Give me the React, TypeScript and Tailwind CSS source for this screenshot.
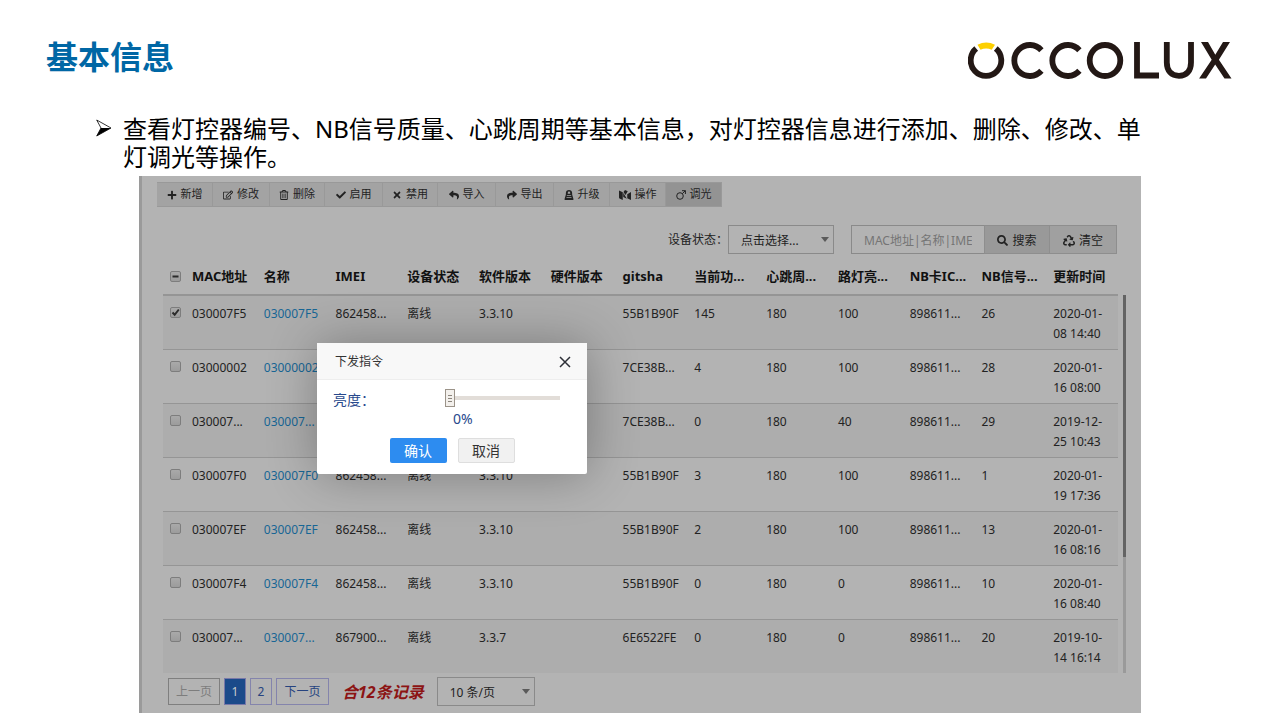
import React from "react";
import { FaPlus, FaRegEdit, FaRegTrashAlt, FaCheck, FaTimes, FaReply, FaShare, FaSearch, FaRecycle } from "react-icons/fa";

function LockIcon() {
  return (
    <svg viewBox="0 0 16 16" fill="currentColor" className="h-2.5 w-2.5" aria-hidden="true">
      <path fillRule="evenodd" d="M8 0C5 0 3 1.800 3 4.600V7L1 14V16h14v-2L13 7V4.600C13 1.800 11 0 8 0ZM6 5c0-1.600.8-2.600 2-2.600s2 1 2 2.600v1H6V5ZM4.500 8.400h7v1.200h-7ZM4 11.600h8v1.200H4Z" />
    </svg>
  );
}

function FoldIcon() {
  return (
    <svg viewBox="0 0 24 20" fill="currentColor" className="h-2.5 w-3" aria-hidden="true">
      <path d="M0 1l7.500 3.700V20L1 16.800Q0 16.300 0 15ZM8.500 5.500 15.700 17.600 8.500 14ZM9 3.800 12 0l5.500 2.600-4.500 7.500ZM16.500 8.500l7.500-4.500V19q0 1.200-1.200.6l-6.300-3.100Z" />
    </svg>
  );
}

function MarsIcon() {
  return (
    <svg viewBox="0 0 10 10" fill="none" stroke="currentColor" className="h-2.5 w-2.5" aria-hidden="true">
      <circle cx="4" cy="6" r="3.300" />
      <path d="M6.300 3.700 9.300 0.700M6 0.700H9.400V4" />
    </svg>
  );
}

function Logo() {
  return (
    <svg viewBox="0 0 264 38" className="h-[38px] w-[264px]" role="img" aria-label="OCCOLUX">
      <g fill="none" stroke="#231815" strokeWidth="5.800">
        <path d="M8.200 6.500A15.300 15.500 0 1 0 27.800 6.500" />
        <path d="M73.400 8.200A15.500 15.500 0 1 0 73.400 28.800" />
        <path d="M111.400 8.200A15.500 15.500 0 1 0 111.400 28.800" />
        <ellipse cx="137" cy="18.500" rx="15.300" ry="15.500" />
        <path d="M169 0V33.500H191" />
        <path d="M198.800 0V20.500C198.800 29 203.500 33.800 211 33.800S223 29 223 20.500V0" />
      </g>
      <path d="M233 0h7l7.300 12.800L255 0h7L250.900 17.800 263.500 36.500h-7L247.200 22.600 238 36.500h-6.900L243.700 17.800Z" fill="#231815" />
      <path d="M9.500 2.700A19 19 0 0 1 27 2.700L23.700 7.800A14 14 0 0 0 12.500 7.800Z" fill="#fdd000" />
    </svg>
  );
}

const tools = [
  { label: "新增", icon: <FaPlus />, cls: "w-14 bg-[#a3a3a3]" },
  { label: "修改", icon: <FaRegEdit />, cls: "w-[57px] bg-[#a3a3a3]" },
  { label: "删除", icon: <FaRegTrashAlt />, cls: "w-[55px] bg-[#a3a3a3]" },
  { label: "启用", icon: <FaCheck />, cls: "w-[58px] bg-[#a3a3a3]" },
  { label: "禁用", icon: <FaTimes />, cls: "w-[55px] bg-[#a3a3a3]" },
  { label: "导入", icon: <FaReply />, cls: "w-[58px] bg-[#a3a3a3]" },
  { label: "导出", icon: <FaShare />, cls: "w-[58px] bg-[#a3a3a3]" },
  { label: "升级", icon: <LockIcon />, cls: "w-14 bg-[#a3a3a3]" },
  { label: "操作", icon: <FoldIcon />, cls: "w-14 bg-[#a3a3a3]" },
  { label: "调光", icon: <MarsIcon />, cls: "w-14 bg-[#939393]" },
];

const heads = ["MAC地址", "名称", "IMEI", "设备状态", "软件版本", "硬件版本", "gitsha", "当前功...", "心跳周...", "路灯亮...", "NB卡IC...", "NB信号...", "更新时间"];

const rows = [
  ["030007F5", "030007F5", "862458...", "离线", "3.3.10", "", "55B1B90F", "145", "180", "100", "898611...", "26", "2020-01-08 14:40"],
  ["03000002", "03000002", "862458...", "离线", "3.3.10", "", "7CE38B...", "4", "180", "100", "898611...", "28", "2020-01-16 08:00"],
  ["030007...", "030007...", "862458...", "离线", "3.3.10", "", "7CE38B...", "0", "180", "40", "898611...", "29", "2019-12-25 10:43"],
  ["030007F0", "030007F0", "862458...", "离线", "3.3.10", "", "55B1B90F", "3", "180", "100", "898611...", "1", "2020-01-19 17:36"],
  ["030007EF", "030007EF", "862458...", "离线", "3.3.10", "", "55B1B90F", "2", "180", "100", "898611...", "13", "2020-01-16 08:16"],
  ["030007F4", "030007F4", "862458...", "离线", "3.3.10", "", "55B1B90F", "0", "180", "0", "898611...", "10", "2020-01-16 08:40"],
  ["030007...", "030007...", "867900...", "离线", "3.3.7", "", "6E6522FE", "0", "180", "0", "898611...", "20", "2019-10-14 16:14"],
];

function Cell({ text, column }: { text: string; column: number }) {
  if (column === 1) {
    return (
      <a href="#" className="text-[#176695]">
        {text}
      </a>
    );
  }
  if (column === 12) {
    return (
      <>
        {text.slice(0, 8)}
        <wbr />
        {text.slice(8)}
      </>
    );
  }
  return <>{text}</>;
}

function Tick({ label, mark }: { label: string; mark?: "check" | "dash" }) {
  return (
    <span className="relative block h-[11px] w-[11px]">
      <input
        type="checkbox"
        aria-label={label}
        defaultChecked={mark === "check"}
        className="block h-[11px] w-[11px] appearance-none rounded-xs border border-[#7d7d7d] bg-linear-to-b from-[#a9a9a9] to-[#9c9c9c]"
      />
      {mark && (
        <svg viewBox="0 0 11 11" className="pointer-events-none absolute inset-0 h-[11px] w-[11px]" fill="none" stroke="#2b2b2b" strokeWidth="2" aria-hidden="true">
          <path d={mark === "check" ? "M2.500 5.500 4.700 7.800 8.800 2.500" : "M2.500 5.500H8.500"} />
        </svg>
      )}
    </span>
  );
}

function Select({ label, value, cls }: { label: string; value: string; cls: string }) {
  return (
    <span className="relative block">
      <select aria-label={label} className={`block appearance-none border border-[#8a8a8a] bg-transparent pt-0.5 pl-3 text-xs text-[#222] ${cls}`}>
        <option>{value}</option>
      </select>
      <svg viewBox="0 0 8 5" className="pointer-events-none absolute top-3 right-[5px] h-[5px] w-2" fill="#5a5a5a" aria-hidden="true">
        <path d="M0 0H8L4 5Z" />
      </svg>
    </span>
  );
}

function Dialog() {
  return (
    <section role="dialog" aria-label="下发指令" className="absolute top-[167px] left-[175px] w-[270px] rounded-xs bg-white pb-[11px] shadow-[1px_1px_50px_rgba(0,0,0,0.3)]">
      <header className="flex h-[37px] items-center justify-between border-b border-[#eee] bg-[#f8f8f8] pt-0.5 pr-4 pl-[18px]">
        <h2 className="text-xs text-[#333]">下发指令</h2>
        <button aria-label="关闭" className="text-[#2d3038]">
          <svg viewBox="0 0 12 12" className="h-3 w-3" fill="none" stroke="currentColor" strokeWidth="1.500" aria-hidden="true">
            <path d="M1 1 11 11M11 1 1 11" />
          </svg>
        </button>
      </header>
      <div className="flex justify-between pt-2 pr-[27px] pl-4 text-sm text-[#27488c]">
        <label htmlFor="level" className="pt-0.5 leading-5">亮度：</label>
        <div className="w-[115px]">
          <input
            id="level"
            type="range"
            defaultValue={0}
            className="block h-5 w-full appearance-none bg-transparent [&::-webkit-slider-runnable-track]:h-1 [&::-webkit-slider-runnable-track]:bg-[#e2ddd8] [&::-webkit-slider-thumb]:-mt-[7px] [&::-webkit-slider-thumb]:h-[18px] [&::-webkit-slider-thumb]:w-[10px] [&::-webkit-slider-thumb]:appearance-none [&::-webkit-slider-thumb]:border [&::-webkit-slider-thumb]:border-[#9b9389] [&::-webkit-slider-thumb]:bg-[#f3f0ec] [&::-webkit-slider-thumb]:bg-[repeating-linear-gradient(to_bottom,#8b857d_0px,#8b857d_1px,#f3f0ec_1px,#f3f0ec_3px)] [&::-webkit-slider-thumb]:bg-size-[4px_7px] [&::-webkit-slider-thumb]:bg-center [&::-webkit-slider-thumb]:bg-no-repeat"
          />
          <output htmlFor="level" className="block pl-2 leading-[22px]">0%</output>
        </div>
      </div>
      <div className="flex justify-center gap-[11px] pt-2">
        <button className="h-[25px] w-[57px] rounded-xs bg-[#2d8cf0] text-sm text-white">确认</button>
        <button className="h-[25px] w-[57px] rounded-xs border border-[#dedede] bg-[#f1f1f1] text-sm text-[#333]">取消</button>
      </div>
    </section>
  );
}

export default function App() {
  return (
    <main className="min-h-screen bg-white pb-[7px] font-['Noto_Sans','Noto_Sans_CJK_SC',sans-serif]">
      <header className="flex justify-between pt-[37px] pr-12 pl-[46px]">
        <h1 className="text-[32px] leading-10 font-bold text-[#0067a5]">基本信息</h1>
        <div className="pt-[5px]">
          <Logo />
        </div>
      </header>
      <div className="flex gap-[11px] pt-[35px] pr-[120px] pl-24 text-black">
        <svg viewBox="0 0 16 18" className="mt-1 h-[18px] w-4 shrink-0" aria-hidden="true">
          <path d="M0.700 1 15 9 0.700 17 5 9Z" fill="#fff" stroke="#000" strokeWidth="0.800" />
          <path d="M15 9 0.700 17 5 9Z" fill="#000" />
        </svg>
        <p className="text-2xl leading-7">
          查看灯控器编号、NB信号质量、心跳周期等基本信息，对灯控器信息进行添加、删除、修改、单灯调光等操作。
        </p>
      </div>

      <div className="relative mt-[5px] mr-[139px] ml-[139px] border-l-3 border-[#9a9a9a] bg-[#b3b3b3] pb-[7px] text-xs text-[#222]">
        <div className="flex pt-[6px] pl-[15px]">
          {tools.map((t) => (
            <button key={t.label} className={`flex h-[25px] items-center justify-center gap-1 border border-l-0 border-[#999] text-[11px] text-[#222] ${t.cls}`}>
              <span className="text-[10px]">{t.icon}</span>
              {t.label}
            </button>
          ))}
        </div>

        <div className="flex items-center justify-end pt-[18px] pr-6">
          <span>设备状态：</span>
          <Select label="设备状态" value="点击选择..." cls="h-[29px] w-[106px]" />
          <input
            type="text"
            aria-label="搜索条件"
            placeholder="MAC地址|名称|IMEI"
            className="ml-[17px] h-[29px] w-[133px] border border-r-0 border-[#8a8a8a] bg-transparent px-3 pt-0.5 text-xs placeholder:text-[#757575]"
          />
          <button className="flex h-[29px] w-[66px] items-center justify-center gap-1 border border-[#8e8e8e] bg-[#999] pt-0.5">
            <FaSearch className="h-[11px] w-[11px]" />
            搜索
          </button>
          <button className="flex h-[29px] w-[67px] items-center justify-center gap-1 border border-l-0 border-[#8e8e8e] bg-[#a0a0a0] pt-0.5">
            <FaRecycle className="h-3 w-3" />
            清空
          </button>
        </div>

        <div className="flex pt-[5px] pr-[15px] pl-[21px]">
          <div className="min-w-0 flex-1">
            <table className="w-full table-fixed border-separate border-spacing-0 text-left">
              <colgroup>
                <col className="w-[22px]" />
                {heads.map((h) => (
                  <col key={h} />
                ))}
              </colgroup>
              <thead>
                <tr>
                  <th className="h-9 border-b border-[#959595] pl-[7px]">
                    <Tick label="全选" mark="dash" />
                  </th>
                  {heads.map((h) => (
                    <th key={h} className="h-9 border-b border-[#959595] pl-[7px] text-[13px] font-bold whitespace-nowrap text-[#111]">
                      {h}
                    </th>
                  ))}
                </tr>
              </thead>
              <tbody className="leading-5">
                {rows.map((r, i) => (
                  <tr key={i} className="odd:bg-[#adadad]">
                    <td className="border-t border-[#959595] pt-[11px] pb-[5px] pl-[7px] align-top">
                      <Tick label={`选择 ${r[0]}`} mark={i === 0 ? "check" : undefined} />
                    </td>
                    {r.map((c, j) => (
                      <td key={j} className="border-t border-[#959595] pt-2 pr-1 pb-[5px] pl-[7px] align-top">
                        <Cell text={c} column={j} />
                      </td>
                    ))}
                  </tr>
                ))}
              </tbody>
            </table>
          </div>
          <div className="mt-9 ml-[5px] w-[3px] bg-[#9a9a9a]">
            <div className="h-[262px] bg-[#636363]" />
          </div>
        </div>

        <nav aria-label="分页" className="flex items-center pt-1 pl-[26px]">
          <button className="h-[27px] w-[52px] border border-[#7f7f7f] text-[#7d7d7d]">上一页</button>
          <button className="ml-1 h-[27px] w-[22px] border border-[#7878a8] bg-[#1b4a8a] text-[#ccc]">1</button>
          <button className="ml-1 h-[27px] w-[22px] border border-[#8484ac] text-[#26437f]">2</button>
          <button className="ml-1 h-[27px] w-[53px] border border-[#8484ac] text-[#26437f]">下一页</button>
          <strong className="pr-[13px] pl-[13px] text-base text-[#8c1414] italic">合12条记录</strong>
          <Select label="每页条数" value="10 条/页" cls="h-[29px] w-[98px]" />
        </nav>

        <Dialog />
      </div>
    </main>
  );
}
